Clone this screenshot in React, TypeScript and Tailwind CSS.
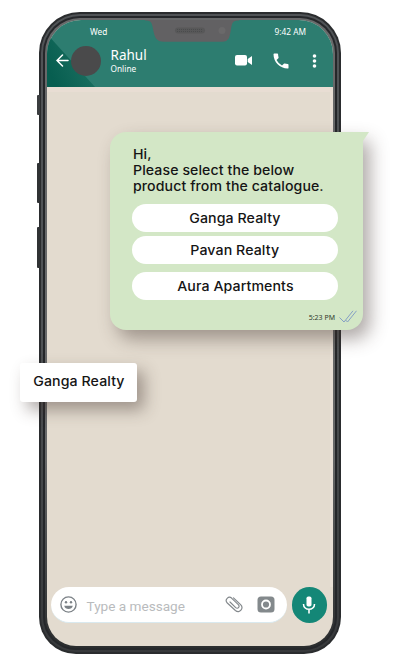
import type { ReactNode } from "react";

function Line({ children }: { children: ReactNode }) {
  return <div className="w-fit origin-left scale-x-[1.087] whitespace-nowrap tracking-[0.08px]">{children}</div>;
}

function StatusBar() {
  return (
    <div className="relative flex h-[24px] justify-between pl-[43px] pr-[27px] pt-[6.500px] text-[8.300px] leading-[12px] text-white">
      <span>Wed</span>
      <span>9:42 AM</span>
      <svg className="absolute left-[98px] top-[-1px]" width="96" height="24" viewBox="0 0 96 24">
        <path d="M0 0H94V1.500C87.500 1.500 87 4 86 10C84.800 18 84 22.800 77 22.800H19C11 22.800 9.500 18 8 10C7 4 6.500 1.500 0 1.500Z" fill="#626163" />
        <rect x="30" y="8.500" width="30" height="6" rx="3" fill="#585859" />
        <path d="M32 10.500H58M32 12.500H58" stroke="#4b4c4d" strokeWidth="1" strokeDasharray="1 1" />
        <circle cx="77" cy="11.500" r="3.500" fill="#6a696a" />
      </svg>
    </div>
  );
}

function Header() {
  return (
    <header className="relative h-[67px] shrink-0 bg-[#2d7d70] font-['Noto_Sans',sans-serif]">
      <svg className="absolute left-0 top-0" width="60" height="67" viewBox="0 0 60 67">
        <defs>
          <linearGradient id="shade" x1="0" y1="0.6" x2="0.8" y2="0.2">
            <stop offset="0" stopColor="#075e50" />
            <stop offset="1" stopColor="#1c7061" />
          </linearGradient>
        </defs>
        <path d="M0 14L48 67H0Z" fill="url(#shade)" />
      </svg>
      <StatusBar />
      <div className="relative flex items-center pt-[2px] text-white">
        <svg className="ml-[8.500px]" width="13" height="13" viewBox="0 0 13 13" fill="none" stroke="white" strokeWidth="1.500" strokeLinecap="round">
          <path d="M6.500 1L1 6.500L6.500 12M1 6.500H12" />
        </svg>
        <div className="ml-[2.500px] size-[30px] rounded-full bg-[#4a4a4b]" />
        <div className="ml-[9.500px] w-[49.500px] pt-[1px]">
          <div className="text-[13.500px] leading-[15px]">Rahul</div>
          <div className="text-[8.300px] leading-[11px]">Online</div>
        </div>
        <svg className="ml-[75px]" width="17" height="11" viewBox="0 0 17 11" fill="white">
          <rect width="12" height="10.500" rx="2" /><path d="M12.700 4L17 1V10L12.700 7Z" />
        </svg>
        <svg className="ml-[19px]" width="20" height="20" viewBox="0 0 24 24" fill="white">
          <path d="M6.620 10.790a15.050 15.050 0 0 0 6.590 6.590l2.200-2.200a1 1 0 0 1 1.010-.24c1.120.37 2.330.57 3.580.57a1 1 0 0 1 1 1V20a1 1 0 0 1-1 1C10.600 21 3 13.400 3 4a1 1 0 0 1 1-1h3.500a1 1 0 0 1 1 1c0 1.250.2 2.460.57 3.580a1 1 0 0 1-.25 1.020Z" />
        </svg>
        <svg className="ml-[20.500px]" width="5" height="14" viewBox="0 0 5 14" fill="white">
          <circle cx="2.500" cy="2" r="1.800" /><circle cx="2.500" cy="7" r="1.800" /><circle cx="2.500" cy="12" r="1.800" />
        </svg>
      </div>
    </header>
  );
}

function Composer() {
  return (
    <div className="flex h-[36px] items-center pl-[4px]">
      <div className="flex h-[36px] w-[236px] items-center rounded-full border-b border-[#d9e9ef] bg-white pl-[9px]">
        <svg width="17" height="17" viewBox="0 0 17 17" fill="none" stroke="#7c8287" strokeWidth="1.400">
          <circle cx="8.500" cy="8.500" r="7.600" />
          <circle cx="6" cy="6.300" r="1.200" fill="#7c8287" stroke="none" /><circle cx="11" cy="6.300" r="1.200" fill="#7c8287" stroke="none" />
          <path d="M4.200 9.700H12.800C12 14 5 14 4.200 9.700Z" fill="#7c8287" stroke="none" />
        </svg>
        <span className="ml-[9.500px] w-[138px] whitespace-nowrap pt-[2px] font-['Roboto',sans-serif] text-[13.600px] leading-[18px] text-[#b9bbbd]">Type a message</span>
        <svg width="18" height="18" viewBox="0 0 18 18" fill="none" stroke="#83888c" strokeWidth="1.150" strokeLinecap="round" strokeLinejoin="round">
          <path d="M8.500 1.800L15.600 8.700C19 12 14.800 18.200 10.400 14.500L2.300 7C-.8 3.800 3.600-.6 6.800 2.300L13.300 8.600C15.300 10.800 12.800 13.500 10.700 11.600L5 6" />
        </svg>
        <svg className="ml-[14.500px]" width="18" height="17" viewBox="0 0 18 17">
          <rect x=".5" y=".5" width="17" height="16" rx="3.500" fill="#83898c" /><circle cx="9" cy="8.500" r="4" fill="none" stroke="white" strokeWidth="1.800" />
        </svg>
      </div>
      <div className="ml-[4.500px] flex size-[35.500px] items-center justify-center rounded-full bg-[#148777]">
        <svg width="14" height="18" viewBox="0 0 14 18" fill="none" stroke="white" strokeWidth="1.600">
          <rect x="4.500" y=".5" width="5" height="10" rx="1.800" fill="white" stroke="none" />
          <path d="M1.500 8C1.500 15 12.500 15 12.500 8M7 13V17.500" />
        </svg>
      </div>
    </div>
  );
}

const OPTIONS = [
  { label: "Ganga Realty", style: "" },
  { label: "Pavan Realty", style: "mt-[4px]" },
  { label: "Aura Apartments", style: "mt-[8px]" },
];

export default function App() {
  return (
    <main className="relative h-[661px] w-[403px] overflow-hidden bg-white pl-[39px] pt-[12px]">
      <div className="absolute left-[37px] top-[95px] h-[20px] w-[3px] rounded-l-[1px] bg-[#3b3d3f]" />
      <div className="absolute left-[37px] top-[163px] h-[40px] w-[3px] rounded-l-[1px] bg-[#303234]" />
      <div className="absolute left-[37px] top-[227px] h-[41px] w-[3px] rounded-l-[1px] bg-[#303234]" />
      <div className="h-[642px] w-[302px] rounded-b-[37px] rounded-t-[41px] bg-[#2a2c2e] p-[2px]">
        <div className="h-full rounded-b-[35px] rounded-t-[39px] bg-linear-to-b from-[#505356] from-50% to-[#37393b] p-[2px]">
          <div className="h-full rounded-b-[33px] rounded-t-[37px] bg-[#25272a] p-[2px]">
            <div className="h-full rounded-b-[31px] rounded-t-[35px] bg-linear-to-b from-[#68696a] from-70% to-[#2b2d2e] px-[2px] pb-[2px] pt-[1.500px]">
              <div className="flex h-full flex-col overflow-hidden rounded-b-[29px] rounded-t-[34px] bg-[#e3dbcf]">
                <Header />
                <div className="flex-1 border-r-[3px] border-t-[5px] border-r-[#e8dfd5] border-t-[#e8ddd3]" />
                <Composer />
                <div className="h-[23px] shrink-0" />
              </div>
            </div>
          </div>
        </div>
      </div>
      <section className="absolute left-[110px] top-[132px] h-[198px] w-[253px] rounded-bl-[16px] rounded-br-[16px] rounded-tl-[16px] bg-[#d3e7c6] font-['Inter',sans-serif] shadow-[7px_9px_18px_rgba(65,50,45,0.42)]">
        <svg className="absolute right-[-6px] top-0" width="8" height="9" viewBox="0 0 8 9"><path d="M0 0H8L2 9Z" fill="#d3e7c6" /></svg>
        <div className="pl-[23px] pt-[15px] text-[13px] font-medium leading-[15.750px] text-[#151515]">
          <Line>Hi,</Line>
          <Line>Please select the below</Line>
          <Line>product from the catalogue.</Line>
        </div>
        <div className="ml-[22px] mt-[9.750px] w-[206px]">
          {OPTIONS.map(({ label, style }) => (
            <button key={label} className={`block h-[28px] w-full rounded-full bg-white text-center text-[13px] font-medium leading-[28px] tracking-[0.080px] text-[#151515] ${style}`}>
              <span className="inline-block scale-x-[1.09]">{label}</span>
            </button>
          ))}
        </div>
        <div className="mt-[9px] flex items-center justify-end pr-[6px] font-['Noto_Sans',sans-serif] text-[7px] leading-[12px] text-[#303b2d]">
          <span className="pt-[3px]">5:23 PM</span>
          <svg className="ml-[4px]" width="18" height="13" viewBox="0 0 18 13" fill="none" stroke="#859fc4" strokeWidth="1">
            <path d="M.5 7.500L5 12L14 .8M6.500 10L8.500 12L17.500 .8" />
          </svg>
        </div>
      </section>
      <div className="absolute left-[20px] top-[363px] flex h-[39px] w-[117px] items-center justify-center rounded-[3px] bg-white pb-[2px] font-['Inter',sans-serif] text-[13px] font-medium tracking-[0.080px] text-[#151515] shadow-[7px_8px_16px_rgba(65,50,45,0.42)]">
        <span className="scale-x-[1.09] whitespace-nowrap">Ganga Realty</span>
      </div>
    </main>
  );
}
